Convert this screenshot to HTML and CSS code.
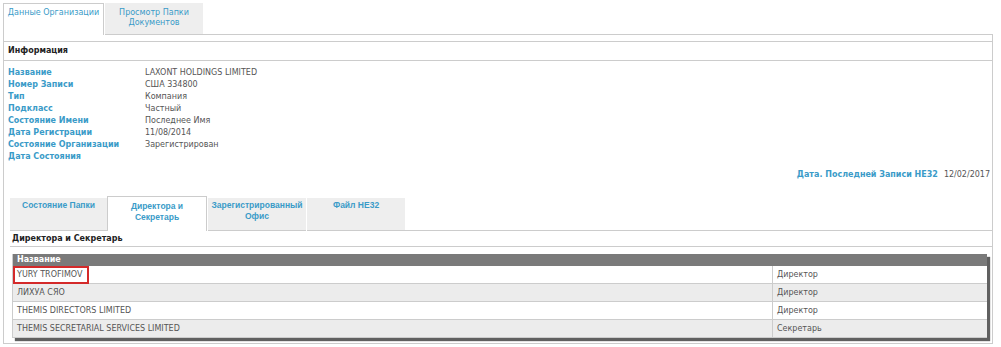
FILE: index.html
```html
<!DOCTYPE html>
<html lang="ru">
<head>
<meta charset="utf-8">
<title>Данные Организации</title>
<link rel="stylesheet" href="styles.css">
</head>
<body>
<div class="page">
  <div class="tabs-top">
    <div class="ttab active">Данные Организации</div>
    <div class="ttab">Просмотр Папки<br>Документов</div>
    <div class="filler"></div>
  </div>
  <div class="panel">
    <div class="section-head">Информация</div>
    <div class="info">
      <div class="lbl">Название</div><div class="val">LAXONT HOLDINGS LIMITED</div>
      <div class="lbl">Номер Записи</div><div class="val">США 334800</div>
      <div class="lbl">Тип</div><div class="val">Компания</div>
      <div class="lbl">Подкласс</div><div class="val">Частный</div>
      <div class="lbl">Состояние Имени</div><div class="val">Последнее Имя</div>
      <div class="lbl">Дата Регистрации</div><div class="val">11/08/2014</div>
      <div class="lbl">Состояние Организации</div><div class="val">Зарегистрирован</div>
      <div class="lbl">Дата Состояния</div><div class="val"></div>
    </div>
    <div class="lastdate"><span class="lbl">Дата. Последней Записи HE32</span><span class="val">12/02/2017</span></div>

    <div class="inner">
      <div class="tabs-inner">
        <div class="itab">Состояние Папки</div>
        <div class="itab active">Директора и<br>Секретарь</div>
        <div class="itab">Зарегистрированный<br>Офис</div>
        <div class="itab">Файл HE32</div>
        <div class="filler"></div>
      </div>
      <div class="section-head2">Директора и Секретарь</div>
      <table class="grid">
        <thead>
          <tr><th colspan="2">Название</th></tr>
        </thead>
        <tbody>
          <tr><td class="name"><span class="mark"></span>YURY TROFIMOV</td><td class="role">Директор</td></tr>
          <tr class="alt"><td class="name">ЛИХУА СЯО</td><td class="role">Директор</td></tr>
          <tr><td class="name">THEMIS DIRECTORS LIMITED</td><td class="role">Директор</td></tr>
          <tr class="alt"><td class="name">THEMIS SECRETARIAL SERVICES LIMITED</td><td class="role">Секретарь</td></tr>
        </tbody>
      </table>
    </div>
  </div>
</div>
</body>
</html>
```

FILE: styles.css
```css
html, body {
  margin: 0;
  padding: 0;
  background: #fff;
}
body {
  font-family: "DejaVu Sans", Verdana, sans-serif;
  font-size: 8px;
  color: #555;
}
.page {
  padding: 3px 0 0 3px;
  width: 990px;
}
.tabs-top {
  display: flex;
  height: 32px;
}
.ttab {
  box-sizing: border-box;
  width: 98px;
  margin-left: 1px;
  background: #eeeeee;
  color: #3a9bc8;
  text-align: center;
  padding-top: 5px;
  line-height: 10px;
  border-bottom: 1px solid #ccc;
}
.ttab.active {
  width: 101px;
  margin-left: 0;
  background: #fff;
  border: 1px solid #ccc;
  border-bottom: none;
  padding-top: 4px;
}
.tabs-top .filler {
  flex: 1;
  border-bottom: 1px solid #ccc;
}
.panel {
  border: 1px solid #ccc;
  border-top: none;
  padding: 6px 0 5px 0;
}
.section-head {
  border-top: 1px solid #ccc;
  border-bottom: 1px solid #ccc;
  height: 18px;
  line-height: 18px;
  padding-left: 4px;
  font-weight: bold;
  color: #222;
}
.info {
  display: grid;
  grid-template-columns: 137px 1fr;
  padding: 6px 0 0 4px;
  line-height: 12px;
}
.lbl {
  font-weight: bold;
  color: #3a9bc8;
}
.val {
  color: #555;
  min-height: 12px;
}
.lastdate {
  margin-top: 6px;
  text-align: right;
  padding-right: 2px;
  line-height: 12px;
}
.lastdate .val {
  margin-left: 6px;
}
.inner {
  margin: 15px 0 0 6px;
}
.tabs-inner {
  display: flex;
  align-items: flex-end;
  height: 35px;
}
.itab {
  box-sizing: border-box;
  width: 98px;
  height: 33px;
  margin-left: 1px;
  background: #eeeeee;
  color: #3a9bc8;
  font-family: "Liberation Sans", Arial, sans-serif;
  font-weight: bold;
  font-size: 8.5px;
  line-height: 11px;
  text-align: center;
  padding-top: 2px;
  border-bottom: 1px solid #ccc;
}
.itab:first-child {
  width: 97px;
  margin-left: 0;
}
.itab.active {
  width: 100px;
  height: 35px;
  margin-left: 0;
  background: #fff;
  border: 1px solid #ccc;
  border-bottom: none;
  padding-top: 4px;
}
.tabs-inner .filler {
  flex: 1;
  border-bottom: 1px solid #ccc;
}
.section-head2 {
  border-bottom: 1px solid #ccc;
  height: 15px;
  line-height: 15px;
  padding-left: 2px;
  font-weight: bold;
  color: #222;
}
.grid {
  margin: 7px 0 0 2px;
  width: 975px;
  border-collapse: collapse;
  border-left: 1px solid #ccc;
  box-shadow: 3px 3px 1px #606060;
}
.grid th {
  background: #7a7a7a;
  color: #fff;
  font-weight: bold;
  text-align: left;
  height: 12px;
  line-height: 12px;
  padding: 0 0 0 4px;
}
.grid td {
  height: 17px;
  line-height: 17px;
  padding: 0 0 0 4px;
  border-bottom: 1px solid #ccc;
  color: #555;
  background: #fff;
}
.grid tr.alt td {
  background: #ececec;
}
.grid td.name {
  width: 755px;
  position: relative;
}
.grid td.role {
  border-left: 1px solid #ccc;
}
.mark {
  position: absolute;
  left: 0;
  top: 0;
  width: 76px;
  height: 18px;
  box-sizing: border-box;
  border: 2px solid #d42a2a;
}
```
